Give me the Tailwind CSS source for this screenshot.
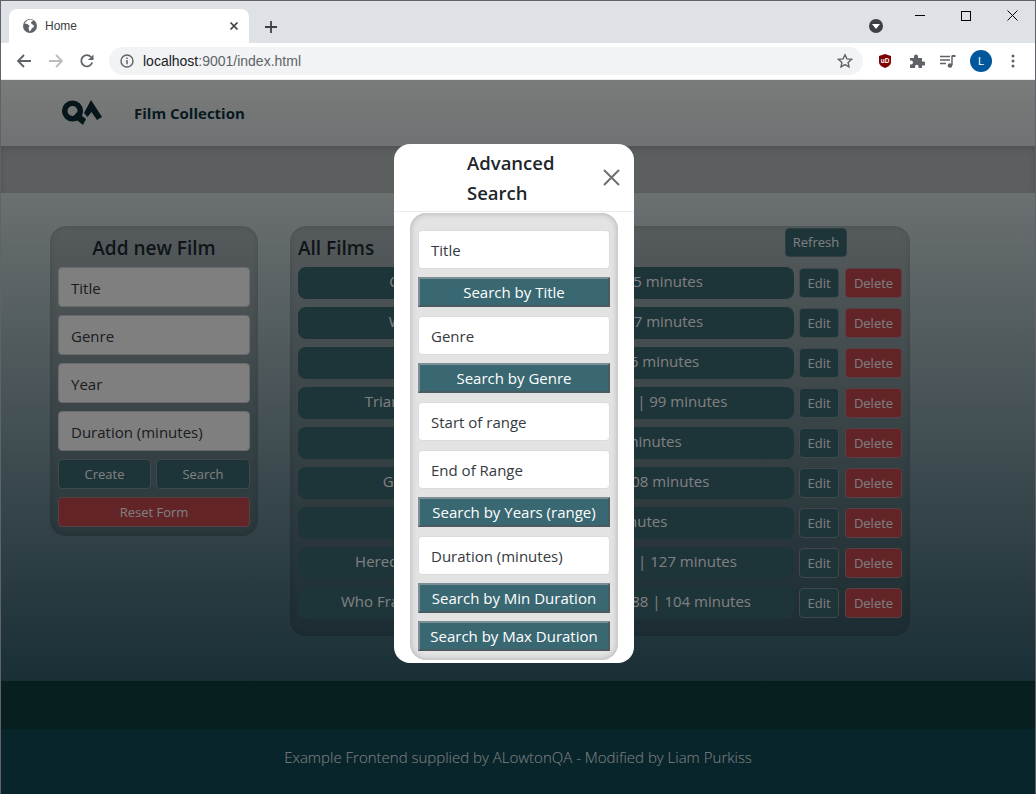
<!DOCTYPE html>
<html>
<head>
<meta charset="utf-8">
<title>Home</title>
<script src="https://cdn.jsdelivr.net/npm/@tailwindcss/browser@4"></script>
</head>
<body class="overflow-hidden">
<div class="w-[1036px] h-[794px] flex flex-col border-x border-t border-[#5f6368] overflow-hidden font-['Open_Sans',sans-serif]">

  <!-- tab strip -->
  <div class="h-[42px] shrink-0 bg-[#dee1e6] flex items-end pl-[8px] relative">
    <div class="w-[240px] h-[34px] bg-white rounded-t-[8px] flex items-center pl-[13px] pr-[10px]">
      <svg width="16" height="16" viewBox="0 0 16 16"><circle cx="8" cy="8" r="7" fill="#5f6368"/><path d="M2.500 5.500l3 .5 2 2-1 2 1 3.500 1.500-1.500 1-2 2-1-.5-2-2-1-.5-2 2.500-1.500-3-1-3.500 1z" fill="#fff"/></svg>
      <span class="ml-[7px] text-[12px] text-[#3c4043] font-['Liberation_Sans',sans-serif]">Home</span>
      <svg class="ml-auto" width="10" height="10" viewBox="0 0 10 10"><path d="M1.500 1.500l7 7M8.500 1.500l-7 7" stroke="#3c4043" stroke-width="1.700"/></svg>
    </div>
    <svg class="ml-[16px] mb-[10px]" width="12" height="12" viewBox="0 0 12 12"><path d="M6 0v12M0 6h12" stroke="#3c4043" stroke-width="1.800"/></svg>
    <div class="absolute left-[868px] top-[18px] w-[14px] h-[14px] rounded-full bg-[#3c4043] flex items-center justify-center">
      <div class="w-0 h-0 border-x-[4px] border-x-transparent border-t-[5px] border-t-white"></div>
    </div>
    <div class="absolute right-0 top-0 flex">
      <div class="w-[46px] h-[29px] flex items-center justify-center"><div class="w-[10px] h-px bg-black"></div></div>
      <div class="w-[46px] h-[29px] flex items-center justify-center"><div class="w-[10px] h-[10px] border border-black"></div></div>
      <div class="w-[46px] h-[29px] flex items-center justify-center"><svg width="11" height="11" viewBox="0 0 11 11"><path d="M.5.5l10 10M10.500.5l-10 10" stroke="#000" stroke-width="1"/></svg></div>
    </div>
  </div>

  <!-- toolbar -->
  <div class="h-[37px] shrink-0 bg-white flex items-center border-b border-[#e8eaed]">
    <div class="w-[108px] shrink-0 flex items-center pl-[15px] gap-[16px]">
      <svg width="16" height="16" viewBox="0 0 16 16"><path d="M15 8H2M8 2L2 8l6 6" fill="none" stroke="#5f6368" stroke-width="1.800"/></svg>
      <svg width="16" height="16" viewBox="0 0 16 16"><path d="M1 8h13M8 2l6 6-6 6" fill="none" stroke="#babcbe" stroke-width="1.800"/></svg>
      <svg class="-ml-[1px]" width="16" height="16" viewBox="0 0 16 16"><path d="M13.200 9.500A5.600 5.600 0 1 1 12 4" fill="none" stroke="#5f6368" stroke-width="1.800"/><path d="M14.500 1.500v5.600H9z" fill="#5f6368"/></svg>
    </div>
    <div class="w-[754px] h-[28px] bg-[#f1f3f4] rounded-full flex items-center pl-[11px] pr-[10px]">
      <svg width="14" height="14" viewBox="0 0 14 14"><circle cx="7" cy="7" r="6" fill="none" stroke="#5f6368" stroke-width="1.400"/><path d="M7 6v4.200M7 3.400v1.500" stroke="#5f6368" stroke-width="1.500"/></svg>
      <span class="ml-[9px] text-[14px] text-[#5f6368] font-['Liberation_Sans',sans-serif]"><span class="text-[#202124]">localhost</span>:9001/index.html</span>
      <svg class="ml-auto" width="16" height="16" viewBox="0 0 16 16"><path d="M8 1.800l1.900 4.100 4.500.5-3.300 3 .9 4.400L8 11.600l-4 2.200.9-4.400-3.300-3 4.500-.5z" fill="none" stroke="#5f6368" stroke-width="1.400"/></svg>
    </div>
    <div class="flex items-center ml-[14px]">
      <svg width="16" height="16" viewBox="0 0 16 16"><path d="M8 1l6 2v6c0 3-3 5-6 6-3-1-6-3-6-6V3z" fill="#800000"/><text x="8" y="10" font-size="6.500" font-weight="700" text-anchor="middle" fill="#fff" font-family="Liberation Sans">uD</text></svg>
      <svg class="ml-[16px]" width="16" height="16" viewBox="0 0 16 16"><path d="M1 5h4V3.500a2 2 0 0 1 4 0V5h4v3.500h1.500a2 2 0 0 1 0 4H13V15H9.500v-1.500a1.700 1.700 0 0 0-3.400 0V15H1v-3.500h1a2 2 0 0 0 0-4H1z" fill="#5f6368"/></svg>
      <svg class="ml-[15px]" width="16" height="16" viewBox="0 0 16 16"><path d="M0 3.500h10M0 7h10M0 10.500h6" stroke="#5f6368" stroke-width="1.300"/><path d="M12 2.500V12" stroke="#5f6368" stroke-width="1.500"/><path d="M12 2h3.500v2H12z" fill="#5f6368"/><circle cx="10" cy="12.500" r="2.300" fill="#5f6368"/></svg>
      <div class="ml-[14px] w-[22px] h-[22px] rounded-full bg-[#01579b] flex items-center justify-center text-white text-[11px] font-['Liberation_Sans',sans-serif]">L</div>
      <svg class="ml-[19px]" width="4" height="14" viewBox="0 0 4 14"><circle cx="2" cy="2" r="1.500" fill="#5f6368"/><circle cx="2" cy="7" r="1.500" fill="#5f6368"/><circle cx="2" cy="12" r="1.500" fill="#5f6368"/></svg>
    </div>
  </div>

  <!-- page -->
  <div class="relative flex-1 flex flex-col min-h-0">
    <header class="h-[66px] shrink-0 bg-linear-to-b from-[#f4f6f6] to-[#dfe6e6] flex items-center pl-[61px]">
      <svg width="44" height="30" viewBox="0 0 44 30"><circle cx="10.500" cy="13" r="7.800" fill="none" stroke="#0a2a35" stroke-width="5.500"/><path d="M11 19l4-5 9 7-3 6z" fill="#0a2a35"/><path d="M29 2l11 17-5 3-5.500-8-4 5-3.500-4z" fill="#0a2a35"/></svg>
      <span class="ml-[28px] text-[15px] font-bold text-[#0f3540]">Film Collection</span>
    </header>
    <div class="h-[47px] shrink-0 bg-[#b8bfbf] shadow-[inset_0_3px_6px_rgba(0,0,0,.15)]"></div>
    <main class="flex-1 bg-linear-to-b from-[#d6e0e2] to-[#335e6c] flex gap-[32px] pl-[49px] pt-[33px] items-start">
      <section class="w-[208px] h-[310px] rounded-[16px] bg-black/15 shadow-[inset_0_0_6px_rgba(0,0,0,.15)] px-[8px] flex flex-col">
        <h2 class="text-[19px] font-semibold text-center text-[#1c2b30] leading-[45px] h-[41px]">Add new Film</h2>
        <div class="h-[40px] bg-white border border-[#d0d5d8] rounded-[4px] px-[12px] pt-[2px] flex items-center text-[15px] text-[#343a40]">Title</div>
        <div class="mt-[8px] h-[40px] bg-white border border-[#d0d5d8] rounded-[4px] px-[12px] pt-[2px] flex items-center text-[15px] text-[#343a40]">Genre</div>
        <div class="mt-[8px] h-[40px] bg-white border border-[#d0d5d8] rounded-[4px] px-[12px] pt-[2px] flex items-center text-[15px] text-[#343a40]">Year</div>
        <div class="mt-[8px] h-[40px] bg-white border border-[#d0d5d8] rounded-[4px] px-[12px] pt-[2px] flex items-center text-[15px] text-[#343a40]">Duration (minutes)</div>
        <div class="mt-[8px] flex gap-[5px]">
          <button class="w-[93px] h-[30px] pt-[1px] bg-[#3a6872] border border-[#7e9398] rounded-[4px] text-[13px] text-white">Create</button>
          <button class="w-[94px] h-[30px] pt-[1px] bg-[#3a6872] border border-[#7e9398] rounded-[4px] text-[13px] text-white">Search</button>
        </div>
        <button class="mt-[8px] h-[30px] pt-[1px] bg-[#c4484f] border border-[#b08088] rounded-[4px] text-[13px] text-white">Reset Form</button>
      </section>
      <section class="w-[620px] h-[410px] rounded-[16px] bg-black/15 shadow-[inset_0_0_6px_rgba(0,0,0,.15)] px-[8px] flex flex-col">
        <div class="h-[41px] flex items-start justify-between shrink-0">
          <h2 class="text-[19px] font-semibold text-[#1c2b30] leading-[44px]">All Films</h2>
          <button class="mt-[2px] mr-[55px] w-[62px] h-[29px] pt-[1px] bg-[#3a6872] border border-[#5f7d85] rounded-[4px] text-[13px] text-white">Refresh</button>
        </div>
        <div class="flex flex-col gap-[8px]">
          <div class="flex items-center h-[32px]"><div class="w-[496px] h-[32px] bg-[#3a6872] rounded-[8px] text-[15px] text-white flex items-center justify-center pb-[3px]">Casablanca | Romance | 1942 | 105 minutes</div><button class="ml-[5px] w-[40px] h-[30px] pt-[1px] bg-[#3a6872] border border-[#7e9398] rounded-[4px] text-[13px] text-white">Edit</button><button class="ml-[6px] w-[57px] h-[30px] pt-[1px] bg-[#c4484f] border border-[#b08088] rounded-[4px] text-[13px] text-white">Delete</button></div>
          <div class="flex items-center h-[32px]"><div class="w-[496px] h-[32px] bg-[#3a6872] rounded-[8px] text-[15px] text-white flex items-center justify-center pb-[3px]">Wall-E | Animated, Sci-Fi | 2008 | 97 minutes</div><button class="ml-[5px] w-[40px] h-[30px] pt-[1px] bg-[#3a6872] border border-[#7e9398] rounded-[4px] text-[13px] text-white">Edit</button><button class="ml-[6px] w-[57px] h-[30px] pt-[1px] bg-[#c4484f] border border-[#b08088] rounded-[4px] text-[13px] text-white">Delete</button></div>
          <div class="flex items-center h-[32px]"><div class="w-[496px] h-[32px] bg-[#3a6872] rounded-[8px] text-[15px] text-white flex items-center justify-center pb-[3px]">Psycho | Horror, Crime | 1960 | 96 minutes</div><button class="ml-[5px] w-[40px] h-[30px] pt-[1px] bg-[#3a6872] border border-[#7e9398] rounded-[4px] text-[13px] text-white">Edit</button><button class="ml-[6px] w-[57px] h-[30px] pt-[1px] bg-[#c4484f] border border-[#b08088] rounded-[4px] text-[13px] text-white">Delete</button></div>
          <div class="flex items-center h-[32px]"><div class="w-[496px] h-[32px] bg-[#3a6872] rounded-[8px] text-[15px] text-white flex items-center justify-center pb-[3px]">Triangle | Horror, Sci-Fi, Drama | 2009 | 99 minutes</div><button class="ml-[5px] w-[40px] h-[30px] pt-[1px] bg-[#3a6872] border border-[#7e9398] rounded-[4px] text-[13px] text-white">Edit</button><button class="ml-[6px] w-[57px] h-[30px] pt-[1px] bg-[#c4484f] border border-[#b08088] rounded-[4px] text-[13px] text-white">Delete</button></div>
          <div class="flex items-center h-[32px]"><div class="w-[496px] h-[32px] bg-[#3a6872] rounded-[8px] text-[15px] text-white flex items-center justify-center pb-[3px]">Heat | Crime, War | 1995 | 98 minutes</div><button class="ml-[5px] w-[40px] h-[30px] pt-[1px] bg-[#3a6872] border border-[#7e9398] rounded-[4px] text-[13px] text-white">Edit</button><button class="ml-[6px] w-[57px] h-[30px] pt-[1px] bg-[#c4484f] border border-[#b08088] rounded-[4px] text-[13px] text-white">Delete</button></div>
          <div class="flex items-center h-[32px]"><div class="w-[496px] h-[32px] bg-[#3a6872] rounded-[8px] text-[15px] text-white flex items-center justify-center pb-[3px]">Grease | Musical, Drama | 1978 | 108 minutes</div><button class="ml-[5px] w-[40px] h-[30px] pt-[1px] bg-[#3a6872] border border-[#7e9398] rounded-[4px] text-[13px] text-white">Edit</button><button class="ml-[6px] w-[57px] h-[30px] pt-[1px] bg-[#c4484f] border border-[#b08088] rounded-[4px] text-[13px] text-white">Delete</button></div>
          <div class="flex items-center h-[32px]"><div class="w-[496px] h-[32px] bg-[#3a6872] rounded-[8px] text-[15px] text-white flex items-center justify-center pb-[3px]">Alien | Horror | 1979 | 97 minutes</div><button class="ml-[5px] w-[40px] h-[30px] pt-[1px] bg-[#3a6872] border border-[#7e9398] rounded-[4px] text-[13px] text-white">Edit</button><button class="ml-[6px] w-[57px] h-[30px] pt-[1px] bg-[#c4484f] border border-[#b08088] rounded-[4px] text-[13px] text-white">Delete</button></div>
          <div class="flex items-center h-[32px]"><div class="w-[496px] h-[32px] bg-[#3a6872] rounded-[8px] text-[15px] text-white flex items-center justify-center pb-[3px]">Hereditary | Horror, Drama, Cult | 2018 | 127 minutes</div><button class="ml-[5px] w-[40px] h-[30px] pt-[1px] bg-[#3a6872] border border-[#7e9398] rounded-[4px] text-[13px] text-white">Edit</button><button class="ml-[6px] w-[57px] h-[30px] pt-[1px] bg-[#c4484f] border border-[#b08088] rounded-[4px] text-[13px] text-white">Delete</button></div>
          <div class="flex items-center h-[32px]"><div class="w-[496px] h-[32px] bg-[#3a6872] rounded-[8px] text-[15px] text-white flex items-center justify-center pb-[3px]">Who Framed Roger Rabbit | Comedy | 1988 | 104 minutes</div><button class="ml-[5px] w-[40px] h-[30px] pt-[1px] bg-[#3a6872] border border-[#7e9398] rounded-[4px] text-[13px] text-white">Edit</button><button class="ml-[6px] w-[57px] h-[30px] pt-[1px] bg-[#c4484f] border border-[#b08088] rounded-[4px] text-[13px] text-white">Delete</button></div>
        </div>
      </section>
    </main>
    <div class="h-[48px] shrink-0 bg-[#113e40]"></div>
    <footer class="h-[65px] shrink-0 bg-[#114a58] flex items-center justify-center pb-[8px] text-[15px] font-light text-white">Example Frontend supplied by ALowtonQA - Modified by Liam Purkiss</footer>

    <!-- dimmed backdrop and modal -->
    <div class="absolute inset-0 bg-black/50"></div>
    <div class="absolute left-[393px] top-[64px] w-[240px] h-[519px] bg-white rounded-[16px] flex flex-col">
      <div class="h-[68px] shrink-0 border-b border-[#e9ecef] flex">
        <h3 class="ml-[73px] mt-[4px] w-[100px] text-[18.500px] leading-[30px] font-semibold text-[#212529]">Advanced Search</h3>
        <svg class="ml-[36px] mt-[25px]" width="17" height="17" viewBox="0 0 17 17"><path d="M1 1l15 15M16 1L1 16" stroke="#6f6f6f" stroke-width="2"/></svg>
      </div>
      <div class="mx-[16px] mt-[1px] h-[447px] bg-[#e3e3e3] rounded-[16px] shadow-[inset_0_0_6px_rgba(0,0,0,.25)] px-[8px] pt-[17px] flex flex-col">
        <div class="h-[39px] shrink-0 bg-white border border-[#d8dce0] rounded-[4px] px-[12px] pt-[2px] flex items-center text-[15px] text-[#343a40]">Title</div>
        <button class="mt-[8px] h-[30px] shrink-0 bg-[#3a6872] border-2 border-t-[#7c8f95] border-l-[#7c8f95] border-r-[#4a5a5e] border-b-[#4a5a5e] text-[15px] leading-[22px] text-white">Search by Title</button>
        <div class="mt-[9px] h-[39px] shrink-0 bg-white border border-[#d8dce0] rounded-[4px] px-[12px] pt-[2px] flex items-center text-[15px] text-[#343a40]">Genre</div>
        <button class="mt-[8px] h-[30px] shrink-0 bg-[#3a6872] border-2 border-t-[#7c8f95] border-l-[#7c8f95] border-r-[#4a5a5e] border-b-[#4a5a5e] text-[15px] leading-[22px] text-white">Search by Genre</button>
        <div class="mt-[9px] h-[39px] shrink-0 bg-white border border-[#d8dce0] rounded-[4px] px-[12px] pt-[2px] flex items-center text-[15px] text-[#343a40]">Start of range</div>
        <div class="mt-[9px] h-[39px] shrink-0 bg-white border border-[#d8dce0] rounded-[4px] px-[12px] pt-[2px] flex items-center text-[15px] text-[#343a40]">End of Range</div>
        <button class="mt-[8px] h-[30px] shrink-0 bg-[#3a6872] border-2 border-t-[#7c8f95] border-l-[#7c8f95] border-r-[#4a5a5e] border-b-[#4a5a5e] text-[15px] leading-[22px] text-white">Search by Years (range)</button>
        <div class="mt-[9px] h-[39px] shrink-0 bg-white border border-[#d8dce0] rounded-[4px] px-[12px] pt-[2px] flex items-center text-[15px] text-[#343a40]">Duration (minutes)</div>
        <button class="mt-[8px] h-[30px] shrink-0 bg-[#3a6872] border-2 border-t-[#7c8f95] border-l-[#7c8f95] border-r-[#4a5a5e] border-b-[#4a5a5e] text-[15px] leading-[22px] text-white">Search by Min Duration</button>
        <button class="mt-[8px] h-[30px] shrink-0 bg-[#3a6872] border-2 border-t-[#7c8f95] border-l-[#7c8f95] border-r-[#4a5a5e] border-b-[#4a5a5e] text-[15px] leading-[22px] text-white">Search by Max Duration</button>
      </div>
    </div>
  </div>
</div>
</body>
</html>
